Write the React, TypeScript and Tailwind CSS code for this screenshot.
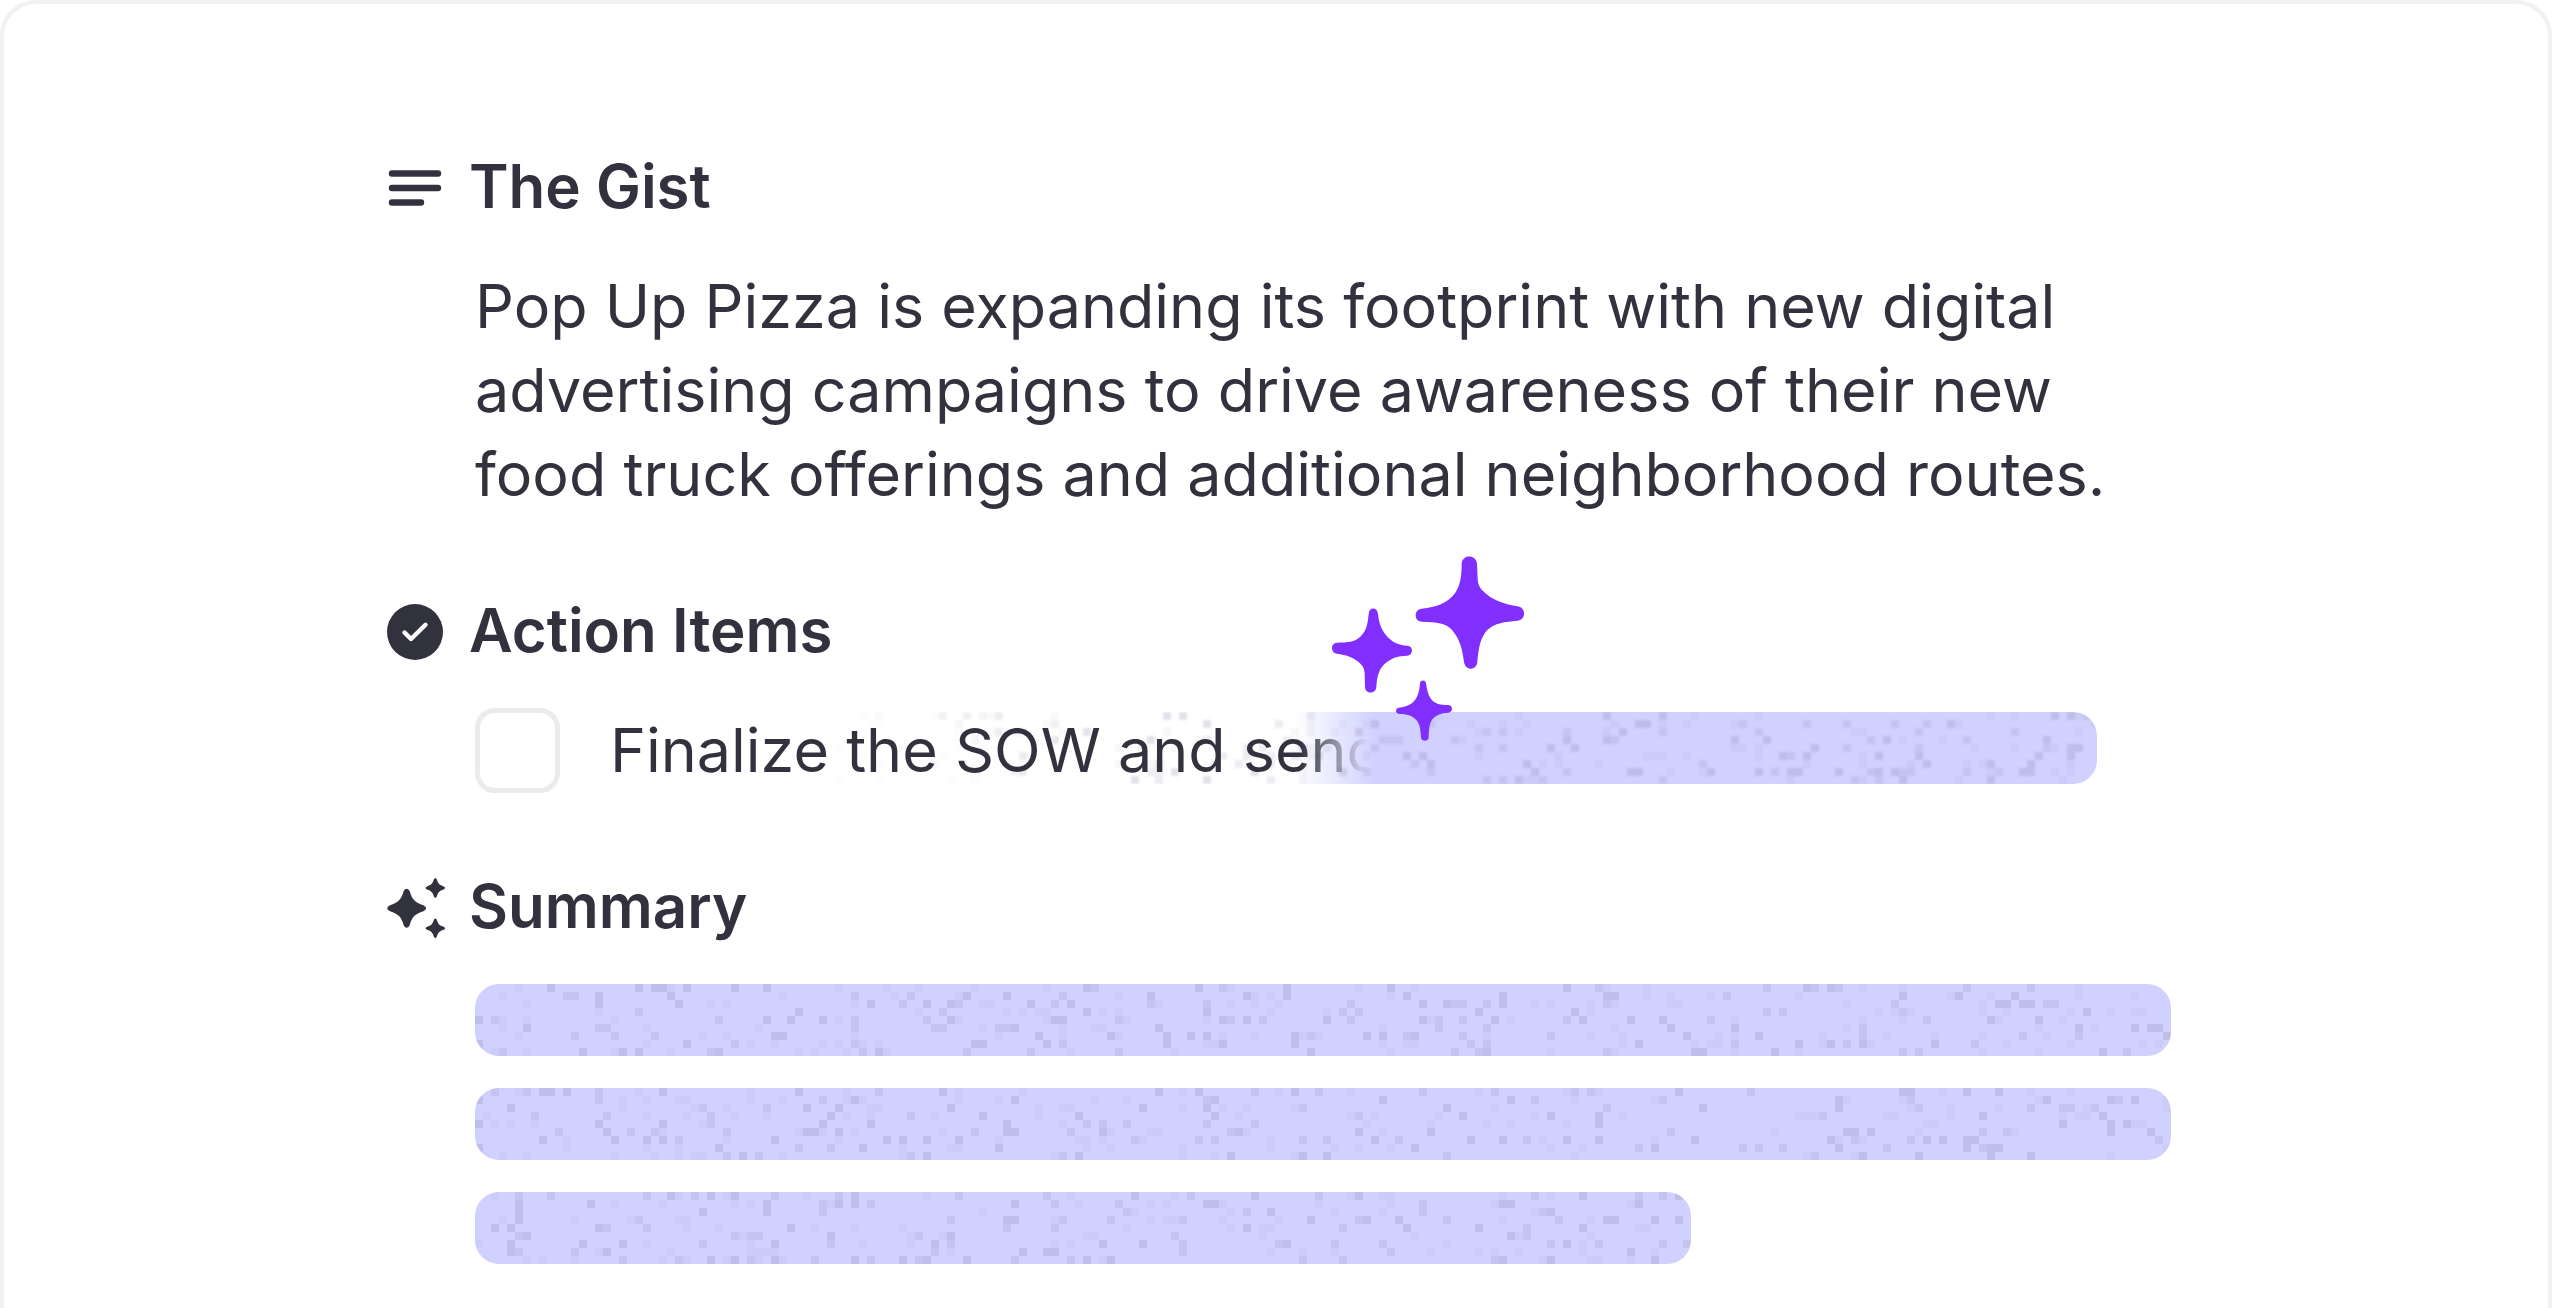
import { useMemo } from "react";
import type { ReactNode } from "react";

const CELL = 8;
const ROWS = 9;

// small seeded generator so the grain is the same on every render
const createRandom = (seed: number) => {
  let s = seed;
  return () => {
    s = (s * 1664525 + 1013904223) % 4294967296;
    return s / 4294967296;
  };
};

const buildGrain = (seed: number, cols: number) => {
  const random = createRandom(seed);
  const tones = ["", "", ""];
  for (let x = 0; x < cols; x++) {
    for (let y = 0; y < ROWS; y++) {
      const r = random();
      const cell = `M${x * CELL} ${y * CELL}h${CELL}v${CELL}h-${CELL}z`;
      if (r < 0.055) tones[0] += cell;
      else if (r < 0.105) tones[1] += cell;
      else if (r < 0.18) tones[2] += cell;
    }
  }
  return tones;
};

const Grain = ({ seed, cols = 212 }: { seed: number; cols?: number }) => {
  const tones = useMemo(() => buildGrain(seed, cols), [seed, cols]);
  return (
    <svg width={cols * CELL} height={ROWS * CELL} aria-hidden="true" className="max-w-none">
      <path d={tones[0]} fill="#77708f" fillOpacity="0.2" />
      <path d={tones[1]} fill="#77708f" fillOpacity="0.13" />
      <path d={tones[2]} fill="#77708f" fillOpacity="0.06" />
    </svg>
  );
};

const SkeletonBar = ({ seed, className }: { seed: number; className: string }) => (
  <div className={`h-[72px] overflow-hidden rounded-[24px] bg-[#d1d1ff] ${className}`}>
    <Grain seed={seed} />
  </div>
);

const LinesIcon = () => (
  <svg width="60" height="60" viewBox="0 -2 60 60" aria-hidden="true" className="shrink-0">
    <path
      d="M5 15.5H51M5 30H51M5 44.5H34"
      stroke="currentColor"
      strokeWidth="6.4"
      strokeLinecap="round"
    />
  </svg>
);

const CheckIcon = () => (
  <svg width="60" height="60" viewBox="0 -2 60 60" aria-hidden="true" className="shrink-0">
    <circle cx="28" cy="30" r="28" fill="currentColor" />
    <path
      d="M17.5 30.5L24 37L38.5 22.8"
      fill="none"
      stroke="white"
      strokeWidth="4.4"
      strokeLinecap="round"
      strokeLinejoin="round"
    />
  </svg>
);

const STAR =
  "M-9 -52Q0 -66 9 -52C16 -26 25 -18 50 -9Q67 0 50 9C25 17 16 26 9 51Q0 66 -9 51C-16 26 -25 17 -50 9Q-67 0 -50 -9C-25 -18 -16 -26 -9 -52Z";

const SparklesIcon = () => (
  <svg
    width="60"
    height="60"
    viewBox="81 79 180 180"
    fill="currentColor"
    aria-hidden="true"
    className="shrink-0 overflow-visible"
  >
    <path d={STAR} transform="translate(140 176)" />
    <path d={STAR} transform="translate(226 115) scale(0.5)" />
    <path d={STAR} transform="translate(226 236) scale(0.5)" />
  </svg>
);

const MagicSparkles = ({ className }: { className: string }) => (
  <svg width="192" height="185" viewBox="276 106 576 555" fill="#802fff" aria-hidden="true" className={className}>
    <path d="M665 130C665 100 710 100 711 130L713 175C714 198 724 208 742 222C764 240 795 250 832 257C859 260 859 298 832 300C795 304 764 306 742 328C722 350 716 378 712 424C710 450 676 452 672 424C667 385 660 357 638 330C618 306 591 304 545 303C521 303 521 265 545 264C590 259 614 250 637 227C661 203 665 166 665 130Z" />
    <path d="M386 280C387 258 412 258 414 280C417 309 426 333 445 351C462 367 477 373 502 375C521 376 520 403 502 405C474 406 456 411 436 428C416 446 411 467 409 500C407 521 376 521 375 500L374 458C373 440 365 432 353 422C337 409 319 403 291 399C271 397 271 367 291 366C323 365 344 364 361 348C380 330 383 309 386 280Z" />
    <path d="M540 488C541 477 557 477 558 488C561 507 564 524 575 537C586 549 600 553 625 553C640 554 639 576 625 576C604 577 588 583 577 596C568 609 567 625 566 651C565 663 544 663 543 651C542 629 540 609 528 597C516 585 501 580 477 580C465 579 465 562 477 561C499 558 514 553 525 538C536 524 538 508 540 488Z" />
  </svg>
);

const SectionTitle = ({ icon, children }: { icon: ReactNode; children: ReactNode }) => (
  <div className="flex items-center gap-[22px]">
    {icon}
    <h2 className="text-[60px] leading-[84px] font-semibold">{children}</h2>
  </div>
);

export default function App() {
  return (
    <main className="min-h-screen overflow-hidden rounded-t-[36px] border-4 border-b-0 border-[#f1f1f1] bg-white font-['Inter',sans-serif] text-[#32323f]">
      <div className="mx-auto max-w-[1790px] pt-[140px] pb-11 pl-1.5">
        <section>
          <SectionTitle icon={<LinesIcon />}>The Gist</SectionTitle>
          <p className="mt-9 pl-[88px] text-[61px] leading-[84px]">
            Pop Up Pizza is expanding its footprint with new digital
            <br />
            advertising campaigns to drive awareness of their new
            <br />
            food truck offerings and additional neighborhood routes.
          </p>
        </section>

        <section className="mt-[72px]">
          <SectionTitle icon={<CheckIcon />}>Action Items</SectionTitle>
          <div className="relative mt-[34px] mr-[74px] ml-[88px] flex h-[88px] items-center gap-[50px]">
            <input
              id="finalize-sow"
              type="checkbox"
              className="size-[85px] shrink-0 appearance-none rounded-[20px] border-[5px] border-[#ebebed] bg-white"
            />
            <label
              htmlFor="finalize-sow"
              className="z-10 bg-linear-to-r from-[#32323f] from-[690px] to-transparent to-[758px] bg-clip-text text-[61px] leading-[84px] whitespace-nowrap text-transparent"
            >
              Finalize the SOW and send
            </label>
            {/* the placeholder being wiped away, its grain runs ahead of the fill */}
            <div className="absolute inset-x-0 top-1.5 h-[72px] overflow-hidden rounded-[24px] bg-linear-to-r from-transparent from-[820px] to-[#d1d1ff] to-[900px]">
              <div className="mask-linear-90 mask-linear-from-transparent mask-linear-from-[340px] mask-linear-to-black mask-linear-to-[640px] blur-[1px]">
                <Grain seed={41} />
              </div>
            </div>
            <MagicSparkles className="absolute bottom-[53px] left-[857px] z-20" />
          </div>
        </section>

        <section className="mt-[70px]">
          <SectionTitle icon={<SparklesIcon />}>Summary</SectionTitle>
          <div className="mt-9 flex flex-col gap-8 pl-[88px]">
            <SkeletonBar seed={7} className="w-full" />
            <SkeletonBar seed={19} className="w-full" />
            <SkeletonBar seed={83} className="w-[71.7%]" />
          </div>
        </section>
      </div>
    </main>
  );
}
